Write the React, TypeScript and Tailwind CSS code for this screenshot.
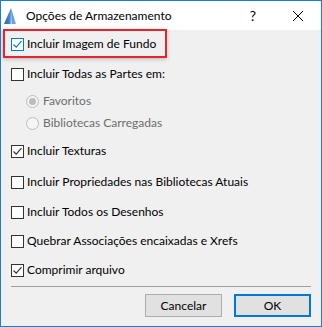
import React from 'react';

function Check({ checked, focus }: { checked?: boolean; focus?: boolean }) {
  const c = focus ? '#0078d7' : '#333333';
  return (
    <span
      className={`flex h-[13px] w-[13px] shrink-0 items-center justify-center border bg-white ${
        focus ? 'border-[#0078d7]' : 'border-[#333333]'
      }`}
    >
      {checked && (
        <svg width="11" height="11" viewBox="0 0 11 11">
          <path d="M1.5 5.5 L4.2 8.2 L9.5 2.2" fill="none" stroke={c} strokeWidth="1.2" />
        </svg>
      )}
    </span>
  );
}

function Radio({ selected }: { selected?: boolean }) {
  return (
    <span className="flex h-[13px] w-[13px] shrink-0 items-center justify-center rounded-full border border-[#bcbcbc] bg-[#f5f5f5]">
      {selected && <span className="h-[7px] w-[7px] rounded-full bg-[#bcbcbc]" />}
    </span>
  );
}

function CheckRow({ label, checked, focus, className }: { label: string; checked?: boolean; focus?: boolean; className: string }) {
  return (
    <div className={`flex h-[20px] items-center gap-[3px] pl-[10px] ${className}`}>
      <Check checked={checked} focus={focus} />
      <span className="text-black">{label}</span>
    </div>
  );
}

function RadioRow({ label, selected, className }: { label: string; selected?: boolean; className: string }) {
  return (
    <div className={`flex h-[20px] items-center gap-[4px] pl-[25px] ${className}`}>
      <Radio selected={selected} />
      <span className="text-[#6d6d6d]">{label}</span>
    </div>
  );
}

export default function App() {
  return (
    <div
      className="relative flex h-[327px] w-[322px] flex-col border border-[#1a7fd4] bg-[#f0f0f0] text-[12px] leading-none"
      style={{ fontFamily: '"Segoe UI", Lato, sans-serif' }}
    >
      {/* Title bar */}
      <div className="flex h-[29px] items-center bg-white">
        <svg className="ml-[3px]" width="12" height="16" viewBox="0 0 12 16">
          <defs>
            <linearGradient id="lg" x1="0" y1="0" x2="1" y2="0">
              <stop offset="0" stopColor="#1d5fb8" />
              <stop offset="1" stopColor="#7fb4ee" />
            </linearGradient>
          </defs>
          <polygon points="7,0 12,16 0,16" fill="url(#lg)" />
          <polygon points="7,0 8,16 6.5,16" fill="#ffffff" opacity="0.6" />
        </svg>
        <span className="ml-[10px] text-[12px] text-black">Opções de Armazenamento</span>
        <span className="ml-auto mr-[37px] text-[14px] text-black">?</span>
        <svg className="mr-[18px]" width="10" height="10" viewBox="0 0 10 10">
          <path d="M0 0 L10 10 M10 0 L0 10" stroke="#000" strokeWidth="1" />
        </svg>
      </div>

      {/* Options */}
      <div className="flex flex-col pt-[4px]">
        <CheckRow label="Incluir Imagem de Fundo" checked focus className="" />
        <CheckRow label="Incluir Todas as Partes em:" className="mt-[10px]" />
        <RadioRow label="Favoritos" selected className="mt-[7px]" />
        <RadioRow label="Bibliotecas Carregadas" className="mt-[2px]" />
        <CheckRow label="Incluir Texturas" checked className="mt-[8px]" />
        <CheckRow label="Incluir Propriedades nas Bibliotecas Atuais" className="mt-[11px]" />
        <CheckRow label="Incluir Todos os Desenhos" className="mt-[10px]" />
        <CheckRow label="Quebrar Associações encaixadas e Xrefs" className="mt-[9px]" />
        <CheckRow label="Comprimir arquivo" checked className="mt-[9px]" />
      </div>

      <div className="mx-[10px] mt-[6px] h-px bg-[#a0a0a0]" />

      <div className="mt-[7px] flex justify-end gap-[12px] pr-[10px]">
        <button className="h-[23px] w-[77px] border border-[#adadad] bg-[#e1e1e1] text-black">Cancelar</button>
        <button className="h-[23px] w-[77px] border-2 border-[#0078d7] bg-[#e1e1e1] text-black">OK</button>
      </div>

      {/* Highlight annotation */}
      <div className="pointer-events-none absolute left-[2px] top-[28px] h-[29px] w-[164px] border-2 border-[#e3262d] shadow-[0_1px_4px_rgba(0,0,0,0.25)]" />
    </div>
  );
}
